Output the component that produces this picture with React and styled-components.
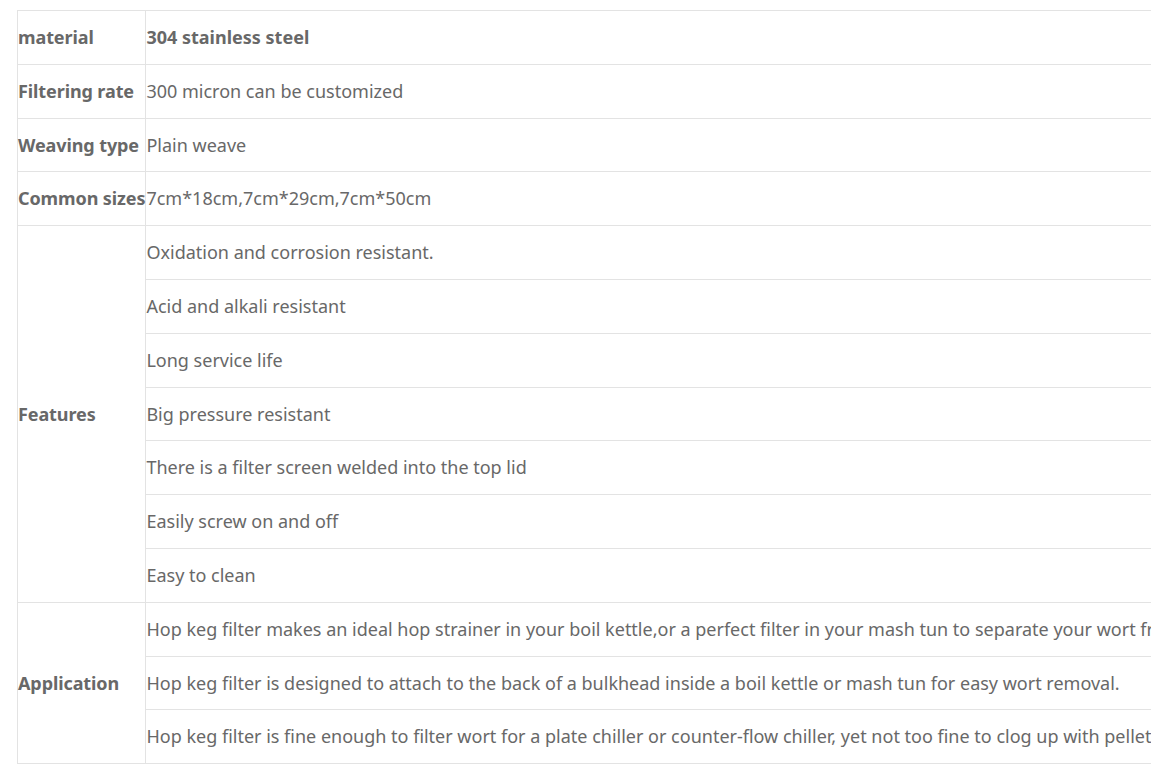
import React from 'react';
import styled, { createGlobalStyle } from 'styled-components';

const GlobalStyle = createGlobalStyle`
  body {
    margin: 0;
    background: #fff;
    font-family: "Noto Sans", "Open Sans", sans-serif;
  }
`;

const rows = [
  { label: 'material', values: ['304 stainless steel'], strong: true },
  { label: 'Filtering rate', values: ['300 micron can be customized'] },
  { label: 'Weaving type', values: ['Plain weave'] },
  { label: 'Common sizes', values: ['7cm*18cm,7cm*29cm,7cm*50cm'] },
  {
    label: 'Features',
    values: [
      'Oxidation and corrosion resistant.',
      'Acid and alkali resistant',
      'Long service life',
      'Big pressure resistant',
      'There is a filter screen welded into the top lid',
      'Easily screw on and off',
      'Easy to clean',
    ],
  },
  {
    label: 'Application',
    values: [
      'Hop keg filter makes an ideal hop strainer in your boil kettle,or a perfect filter in your mash tun to separate your wort from the grain.',
      'Hop keg filter is designed to attach to the back of a bulkhead inside a boil kettle or mash tun for easy wort removal.',
      'Hop keg filter is fine enough to filter wort for a plate chiller or counter-flow chiller, yet not too fine to clog up with pellet hops.',
    ],
  },
];

export default function App() {
  return (
    <>
      <GlobalStyle />
      <Page>
        <Frame>
          <SpecTable>
            <tbody>
              {rows.map(row =>
                row.values.map((value, i) => (
                  <tr key={row.label + i}>
                    {i === 0 && <Label rowSpan={row.values.length}>{row.label}</Label>}
                    <Value strong={row.strong}>{value}</Value>
                  </tr>
                ))
              )}
            </tbody>
          </SpecTable>
        </Frame>
      </Page>
    </>
  );
}

const Page = styled.div`
  padding: 10px 25px 0 17px;
`;

const Frame = styled.div`
  overflow: hidden;
`;

const SpecTable = styled.table`
  border-collapse: collapse;
  border-top: 1px solid #e3e3e3;
  min-width: 100%;
  font-size: 18px;
  color: #686868;
`;

const Label = styled.td`
  border: 1px solid #e3e3e3;
  padding: 13px 0;
  line-height: 26.8px;
  font-weight: 700;
  letter-spacing: -0.1px;
  white-space: nowrap;
  vertical-align: middle;
  width: 1px;
`;

const Value = styled.td`
  border-bottom: 1px solid #e3e3e3;
  padding: 13px 0;
  line-height: 26.8px;
  white-space: nowrap;
  font-weight: ${p => (p.strong ? 700 : 400)};
`;
